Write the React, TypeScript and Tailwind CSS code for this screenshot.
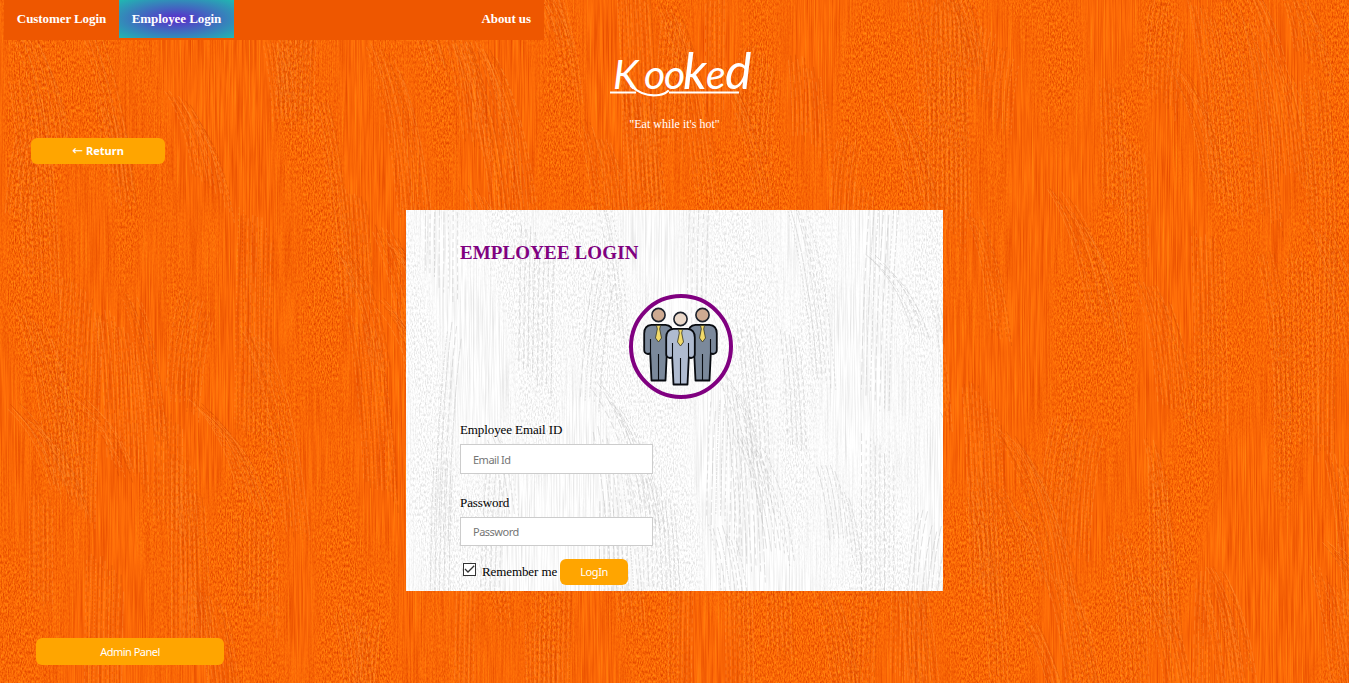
import { useId, useState } from 'react';

type GrainProps = { width: number; height: number; tone: 'orange' | 'white'; seed: number };

function randomizer(seed: number) {
  let s = seed;
  return () => {
    s = (s * 16807) % 2147483647;
    return s / 2147483647;
  };
}

// Each brush mark is a bundle of thin bristle lines that fan out under a curved tip.
function brushMarks(width: number, height: number, seed: number) {
  const rnd = randomizer(seed);
  const marks: { d: string; light: boolean; dash: string }[] = [];
  const count = Math.round((width * height) / 7000);
  for (let i = 0; i < count; i++) {
    const x = rnd() * width;
    const y = rnd() * height - 60;
    const len = 70 + rnd() * 150;
    const lean = (rnd() - 0.25) * 65;
    const lines = 8 + Math.floor(rnd() * 12);
    for (let j = 0; j < lines; j++) {
      const sx = x + j * 2.3;
      const sy = y + Math.pow(j / 4, 2) * 2 + rnd() * 14;
      marks.push({
        d: `M${sx.toFixed(1)} ${sy.toFixed(1)}q${(lean * 0.7).toFixed(1)} ${(len * 0.35).toFixed(1)} ${lean.toFixed(1)} ${len.toFixed(1)}`,
        light: j % 2 === 0,
        dash: `${(2 + rnd() * 9).toFixed(0)} ${(1 + rnd() * 3).toFixed(0)}`,
      });
    }
  }
  return marks;
}

function WoodGrain({ width, height, tone, seed }: GrainProps) {
  const id = useId().replace(/[^a-zA-Z0-9]/g, '');
  const orange = tone === 'orange';
  const long = orange
    ? '0.2 0 0 0 0.88  0.28 0 0 0 0.265  0.07 0 0 0 -0.01  0 0 0 0 1'
    : '0.24 0 0 0 0.86  0.24 0 0 0 0.86  0.24 0 0 0 0.86  0 0 0 0 1';
  const fine = orange
    ? '0.3 0 0 0 0.825  0.42 0 0 0 0.195  0.12 0 0 0 -0.04  0 0 0 0 1'
    : '0.3 0 0 0 0.825  0.3 0 0 0 0.825  0.3 0 0 0 0.825  0 0 0 0 1';
  return (
    <svg className="absolute inset-0" width={width} height={height} aria-hidden="true">
      <defs>
        <filter id={`${id}l`} x="0" y="0" width="100%" height="100%" colorInterpolationFilters="sRGB">
          <feTurbulence type="fractalNoise" baseFrequency="0.71 0.014" numOctaves={3} seed={seed} />
          <feColorMatrix values={long} />
        </filter>
        <filter id={`${id}f`} x="0" y="0" width="100%" height="100%" colorInterpolationFilters="sRGB">
          <feTurbulence type="fractalNoise" baseFrequency="0.83 0.31" numOctaves={2} seed={seed + 4} result="fine" />
          <feTurbulence type="fractalNoise" baseFrequency="0.014 0.004" numOctaves={2} seed={seed + 9} result="area" />
          <feColorMatrix in="fine" values={fine} result="grain" />
          <feColorMatrix in="area" values="0 0 0 0 1  0 0 0 0 1  0 0 0 0 1  0 5 0 0 -2.1" result="mask" />
          <feComposite in="grain" in2="mask" operator="in" />
        </filter>
      </defs>
      <rect width={width} height={height} filter={`url(#${id}l)`} />
      <rect width={width} height={height} filter={`url(#${id}f)`} />
      {brushMarks(width, height, seed * 977 + 31).map((m, i) => (
        <path
          key={i}
          d={m.d}
          fill="none"
          stroke={orange ? (m.light ? '#ff9438' : '#d24700') : m.light ? '#ffffff' : '#bdbdbd'}
          strokeWidth="1"
          strokeOpacity={orange ? 0.46 : 0.45}
          strokeDasharray={m.dash}
        />
      ))}
    </svg>
  );
}

function Worker({ x, y, skin, suit }: { x: number; y: number; skin: string; suit: string }) {
  return (
    <g transform={`translate(${x} ${y})`} stroke="#080b10" strokeWidth="1.8" strokeLinejoin="round">
      <circle cx="0" cy="0" r="6.6" fill={skin} stroke="#1d222c" strokeWidth="1.6" />
      <path d="M-7 9.8H7Q14.3 10.3 14.3 18.5V35Q14.3 38.5 10.5 39L8.3 38.5 7 65.5H-7L-8.3 38.5-10.5 39Q-14.3 38.5-14.3 35V18.5Q-14.3 10.3-7 9.8Z" fill={suit} />
      <path d="M-8 24V38M8 24V38M0 39V65" fill="none" strokeWidth="1.1" />
      <path d="M-2 10.5H2L1.2 14 3 23 0 27-3 23-1.2 14Z" fill="#f2db69" stroke="#343322" strokeWidth=".8" />
    </g>
  );
}

function EmployeesBadge() {
  return (
    <svg width="104" height="105" viewBox="0 0 104 105" aria-label="Employees">
      <ellipse cx="52" cy="52.5" rx="50" ry="50.5" fill="#ffffff" fillOpacity=".35" stroke="#800080" strokeWidth="4" />
      <Worker x={29.5} y={21} skin="#ceaa91" suit="#7b899b" />
      <Worker x={73.5} y={21} skin="#ceaa91" suit="#7b899b" />
      <Worker x={51.5} y={25} skin="#ead8c9" suit="#afbbd0" />
    </svg>
  );
}

function Brand() {
  return (
    <svg width="160" height="62" viewBox="604 40 160 62" className="block">
      <text y="89" fill="#fff" className="font-['Lato'] text-[41px] italic" x="613 644 664 683 706 725">
        Koo<tspan className="text-[50px]">k</tspan>e<tspan className="text-[50px]">d</tspan>
      </text>
      <path d="M610 92.5H636M669 92.5H739" stroke="#fff" strokeWidth="2" />
      <path d="M631 86Q644 97.5 659 95Q665 94 668 91" fill="none" stroke="#fff" strokeWidth="2.2" strokeLinecap="round" />
    </svg>
  );
}

export default function App() {
  const [remember, setRemember] = useState(true);
  return (
    <div className="relative h-[683px] w-[1349px] overflow-hidden bg-[#f96905] font-['Liberation_Serif',serif]">
      <WoodGrain width={1349} height={683} tone="orange" seed={7} />
      <div className="relative flex h-full flex-col items-start">
        <nav className="ml-1 flex h-10 w-[540px] shrink-0 bg-[#ee5700] text-[13px] leading-[37px] font-bold tracking-[-0.08px] text-white">
          <a href="#customer" className="w-[115px] text-center">Customer Login</a>
          <a href="#employee" className="h-[38px] w-[115px] bg-[radial-gradient(ellipse_at_center,#5b2bcb_0%,#20b8b1_100%)] text-center">
            Employee Login
          </a>
          <a href="#about" className="ml-auto pr-[13px]">About us</a>
        </nav>
        <header className="flex h-[98px] w-full shrink-0 flex-col items-center text-white">
          <div className="ml-[19px]"><Brand /></div>
          <p className="mt-[14px] text-[12px] leading-4">"Eat while it's hot"</p>
        </header>
        <button className="ml-[31px] flex h-[26px] w-[134px] shrink-0 items-center justify-center gap-[3px] rounded-md bg-[#ffa500] font-['Noto_Sans',sans-serif] text-[11px] font-bold text-white">
          <span className="font-['DejaVu_Sans'] text-[13px] font-normal">←</span>
          <span>Return</span>
        </button>
        <main className="relative mt-[46px] ml-[406px] h-[381px] w-[537px] shrink-0 overflow-hidden bg-white">
          <WoodGrain width={537} height={381} tone="white" seed={19} />
          <form className="relative flex flex-col items-start pl-[54px] text-[13px] leading-4 tracking-[-0.1px] text-black" onSubmit={(e) => e.preventDefault()}>
            <h1 className="mt-[31px] text-[19px] leading-6 font-bold tracking-[0.12px] text-[#800080]">EMPLOYEE LOGIN</h1>
            <div className="mt-[29px] ml-[169px] h-[105px]"><EmployeesBadge /></div>
            <label htmlFor="email" className="mt-[23px]">Employee Email ID</label>
            <input
              id="email"
              placeholder="Email Id"
              className="mt-[6px] h-[30px] w-[193px] border border-[#ccc] bg-white px-3 font-['Noto_Sans',sans-serif] text-[11px] tracking-[-0.5px] placeholder:text-[#757575]"
            />
            <label htmlFor="password" className="mt-[21px]">Password</label>
            <input
              id="password"
              type="password"
              placeholder="Password"
              className="mt-[6px] h-[29px] w-[193px] border border-[#ccc] bg-white px-3 font-['Noto_Sans',sans-serif] text-[11px] tracking-[-0.5px] placeholder:text-[#757575]"
            />
            <div className="mt-[13px] flex h-[26px] items-center">
              <label className="flex items-center">
                <span className="relative mr-1.5 mb-[5px] ml-[3px] block size-[13px] border border-[#333] bg-white">
                  <input type="checkbox" checked={remember} onChange={(e) => setRemember(e.target.checked)} className="absolute inset-0 opacity-0" />
                  {remember && (
                    <svg width="11" height="11" viewBox="0 0 11 11" className="block">
                      <path d="M1 5 4 8 10.2 1.8" fill="none" stroke="#333" strokeWidth="1.3" />
                    </svg>
                  )}
                </span>
                <span>Remember me</span>
              </label>
              <button className="ml-[3px] h-[26px] w-[68px] rounded-md bg-[#ffa500] font-['Noto_Sans',sans-serif] text-[11px] tracking-[-0.4px] text-white">LogIn</button>
            </div>
          </form>
        </main>
        <button className="mt-[47px] ml-[36px] h-[27px] w-[188px] shrink-0 rounded-md bg-[#ffa500] pt-px font-['Noto_Sans',sans-serif] text-[11px] tracking-[-0.5px] text-white">
          Admin Panel
        </button>
      </div>
    </div>
  );
}
